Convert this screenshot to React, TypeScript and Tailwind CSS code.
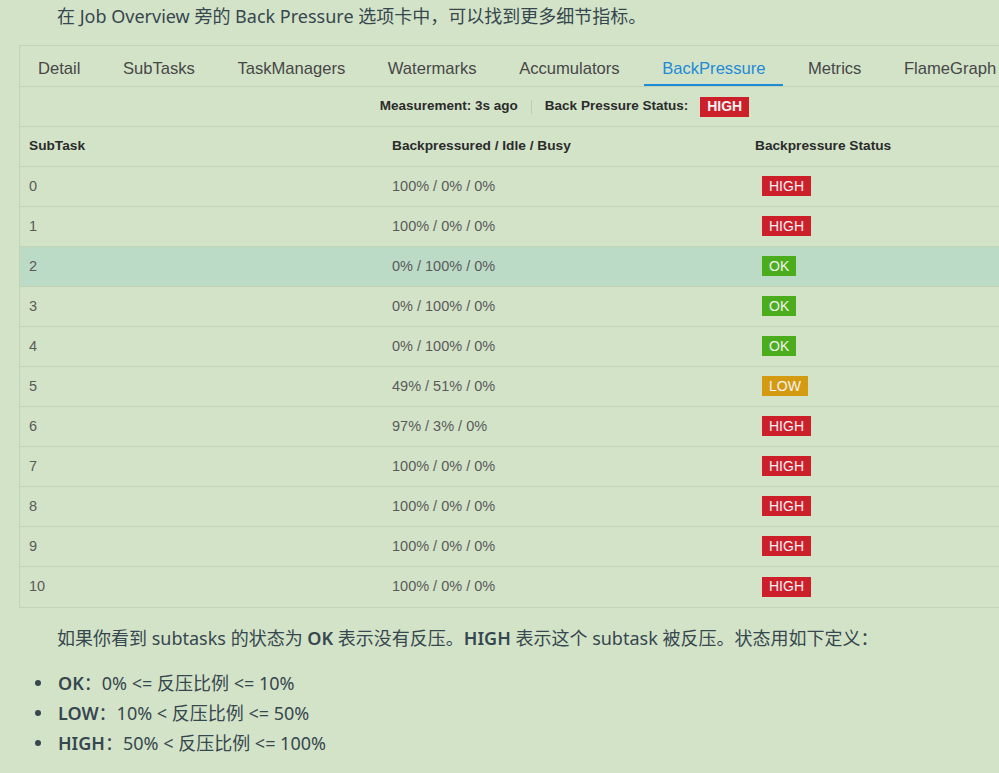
const tabs = ['Detail', 'SubTasks', 'TaskManagers', 'Watermarks', 'Accumulators', 'BackPressure', 'Metrics', 'FlameGraph'];

type Status = 'HIGH' | 'OK' | 'LOW';

const rows: { id: number; ratio: string; status: Status }[] = [
    { id: 0, ratio: '100% / 0% / 0%', status: 'HIGH' },
    { id: 1, ratio: '100% / 0% / 0%', status: 'HIGH' },
    { id: 2, ratio: '0% / 100% / 0%', status: 'OK' },
    { id: 3, ratio: '0% / 100% / 0%', status: 'OK' },
    { id: 4, ratio: '0% / 100% / 0%', status: 'OK' },
    { id: 5, ratio: '49% / 51% / 0%', status: 'LOW' },
    { id: 6, ratio: '97% / 3% / 0%', status: 'HIGH' },
    { id: 7, ratio: '100% / 0% / 0%', status: 'HIGH' },
    { id: 8, ratio: '100% / 0% / 0%', status: 'HIGH' },
    { id: 9, ratio: '100% / 0% / 0%', status: 'HIGH' },
    { id: 10, ratio: '100% / 0% / 0%', status: 'HIGH' },
];

function Badge({ status }: { status: Status }) {
    const color = status === 'HIGH' ? 'bg-[#cc1f2a]' : status === 'OK' ? 'bg-[#4bad1c]' : 'bg-[#d49b12]';
    return (
        <span className={`inline-flex items-center h-[20px] px-[7px] text-[14px] text-[#f2f2f2] ${color}`}>
            {status}
        </span>
    );
}

export default function App() {
    const sans = "font-['Liberation_Sans',Arial,sans-serif]";
    const cjk = "font-['Noto_Sans','Noto_Sans_CJK_SC',sans-serif]";

    return (
        <div className={`w-[999px] h-[773px] overflow-hidden bg-[#d3e3c8] text-[#37474f] ${cjk}`}>
            <p className="pl-[57px] pt-[4px] text-[18px] leading-[24px]">
                在 Job Overview 旁的 Back Pressure 选项卡中，可以找到更多细节指标。
            </p>

            {/* Job overview panel */}
            <div className={`mt-[17px] ml-[19px] w-[1091px] border border-[#c2d4b6] ${sans}`}>
                <div className="flex h-[41px] border-b border-[#c2d4b6] gap-[6.5px]">
                    {tabs.map(t => (
                        <div
                            key={t}
                            className={`flex items-center pt-[8px] px-[18px] text-[16.6px] ${t === 'BackPressure' ? 'text-[#1f8ad6] border-b-2 border-[#1f8ad6]' : 'text-[#474747] border-b-2 border-transparent'}`}
                        >
                            {t}
                        </div>
                    ))}
                </div>

                <div className="flex h-[40px] items-center justify-center border-b border-[#c2d4b6] text-[13.5px] font-bold text-[#2b2b2b]">
                    <span>Measurement: 3s ago</span>
                    <span className="mx-[13px] h-[14px] w-px bg-[#bccdb0]" />
                    <span className="mr-[12px]">Back Pressure Status:</span>
                    <Badge status="HIGH" />
                </div>

                <div className="grid grid-cols-[363px_363px_1fr] h-[40px] items-center border-b border-[#c2d4b6] text-[13.7px] font-bold text-[#2b2b2b]">
                    <div className="px-[9px]">SubTask</div>
                    <div className="px-[9px]">Backpressured / Idle / Busy</div>
                    <div className="px-[9px]">Backpressure Status</div>
                </div>

                {rows.map((r, i) => (
                    <div
                        key={r.id}
                        className={`grid grid-cols-[363px_363px_1fr] h-[40px] items-center text-[14.5px] text-[#5a5a5a] ${i < rows.length - 1 ? 'border-b border-[#c2d4b6]' : ''} ${r.id === 2 ? 'bg-[#bcdbc7]' : ''}`}
                    >
                        <div className="px-[9px]">{r.id}</div>
                        <div className="px-[9px]">{r.ratio}</div>
                        <div className="px-[16px]">
                            <Badge status={r.status} />
                        </div>
                    </div>
                ))}
            </div>

            <p className="mt-[18px] pl-[57px] text-[18px] leading-[24px]">
                如果你看到 subtasks 的状态为 <b className="font-semibold">OK</b> 表示没有反压。<b className="font-semibold">HIGH</b> 表示这个 subtask 被反压。状态用如下定义：
            </p>

            <ul className="mt-[18px] text-[18px] leading-[30px]">
                {[
                    ['OK', '0% <= 反压比例 <= 10%'],
                    ['LOW', '10% < 反压比例 <= 50%'],
                    ['HIGH', '50% < 反压比例 <= 100%'],
                ].map(([k, v]) => (
                    <li key={k} className="flex items-center">
                        <span className="ml-[35px] mr-[17px] w-[6px] h-[6px] rounded-full bg-[#37474f]" />
                        <b className="font-semibold">{k}</b>
                        <span>：</span>
                        <span>{v}</span>
                    </li>
                ))}
            </ul>
        </div>
    );
}
